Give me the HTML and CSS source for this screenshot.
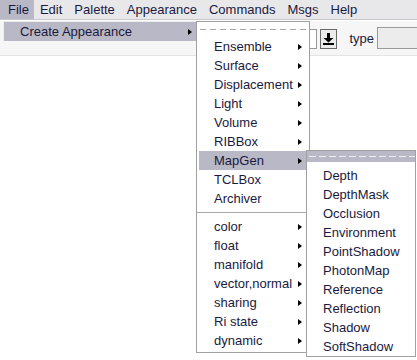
FILE: index.html
```html
<!DOCTYPE html>
<html>
<head>
    <meta charset="UTF-8">
    <meta name="viewport" content="width=device-width,initial-scale=1.0">
    <title>Appearance</title>
    <link rel="stylesheet" href="styles.css">
</head>
<body>
    <div class="menubar">
        <span class="menu active">File</span>
        <span class="menu">Edit</span>
        <span class="menu">Palette</span>
        <span class="menu">Appearance</span>
        <span class="menu">Commands</span>
        <span class="menu">Msgs</span>
        <span class="menu">Help</span>
    </div>
    <div class="toolbar">
        <div class="field small"></div>
        <div class="dl">
            <svg width="11" height="12" viewBox="0 0 11 12">
                <rect x="4" y="0" width="3" height="5" fill="#000"/>
                <polygon points="0.5,5 10.5,5 5.5,9.5" fill="#000"/>
                <rect x="0" y="10" width="11" height="2" fill="#000"/>
            </svg>
        </div>
        <span class="lbl">type</span>
        <div class="field wide"></div>
    </div>

    <div class="popup file-menu">
        <div class="item hot">Create Appearance<i class="arrow"></i></div>
    </div>

    <div class="popup appearance-menu">
        <div class="tearoff"></div>
        <div class="item">Ensemble<i class="arrow"></i></div>
        <div class="item">Surface<i class="arrow"></i></div>
        <div class="item">Displacement<i class="arrow"></i></div>
        <div class="item">Light<i class="arrow"></i></div>
        <div class="item">Volume<i class="arrow"></i></div>
        <div class="item">RIBBox<i class="arrow"></i></div>
        <div class="item hot">MapGen<i class="arrow"></i></div>
        <div class="item">TCLBox</div>
        <div class="item">Archiver</div>
        <div class="sep"></div>
        <div class="item">color<i class="arrow"></i></div>
        <div class="item">float<i class="arrow"></i></div>
        <div class="item">manifold<i class="arrow"></i></div>
        <div class="item">vector,normal<i class="arrow"></i></div>
        <div class="item">sharing<i class="arrow"></i></div>
        <div class="item">Ri state<i class="arrow"></i></div>
        <div class="item">dynamic<i class="arrow"></i></div>
    </div>

    <div class="popup mapgen-menu">
        <div class="tearoff"></div>
        <div class="item">Depth</div>
        <div class="item">DepthMask</div>
        <div class="item">Occlusion</div>
        <div class="item">Environment</div>
        <div class="item">PointShadow</div>
        <div class="item">PhotonMap</div>
        <div class="item">Reference</div>
        <div class="item">Reflection</div>
        <div class="item">Shadow</div>
        <div class="item">SoftShadow</div>
    </div>
</body>
</html>
```

FILE: styles.css
```css
body{margin: 0;background: #fff;font-family: "Liberation Sans", Arial, sans-serif;font-size: 13px;color: #1a1a40;width: 417px;height: 360px;overflow: hidden;position: relative;}

.menubar{display: flex;height: 19px;background: #e8e8ea;border-bottom: 1px solid #c8c8c8;padding-left: 2px;}
.menu{padding: 0 6px;line-height: 19px;}
.menu.active{background: #b8b8c6;margin-left: -2px;padding-left: 8px;padding-right: 5px;}

.toolbar{display: flex;align-items: center;justify-content: flex-end;height: 34px;background: #f6f6f6;border-top: 1px solid #fff;border-bottom: 1px solid #e4e4e4;}
.field{box-sizing: border-box;height: 20px;border: 1px solid #9a9a9a;background: #fff;}
.field.small{width: 22px;margin-top: 1px;}
.field.wide{width: 40px;background: #ececec;border-right: 0;height: 22px;}
.dl{box-sizing: border-box;width: 17px;height: 20px;margin: 1px 0 0 3px;border: 1px solid #6a6a6a;background: #ececec;display: flex;align-items: center;justify-content: center;}
.dl svg{display: block;}
.lbl{margin: 0 3px 0 12px;color: #1a1a40;}

.popup{position: absolute;background: #fff;border: 1px solid #a0a0a0;box-sizing: border-box;}
.file-menu{left: 3px;top: 21px;width: 195px;border-color: #ececec;border-bottom: 0;}
.appearance-menu{left: 196px;top: 21px;width: 114px;padding-bottom: 2px;}
.mapgen-menu{left: 306px;top: 150px;width: 110px;}

.item{display: flex;align-items: center;justify-content: space-between;height: 19px;line-height: 19px;padding: 0 8px 0 16px;white-space: nowrap;}
.item.hot{background: #b8b8c6;}
.file-menu .item{padding-right: 5px;}
.appearance-menu .item{margin: 0 3px 0 2px;padding: 0 4px 0 15px;}
.mapgen-menu .item{padding-left: 16px;}

.arrow{display: block;flex-shrink: 0;margin-left: 4px;width: 0;height: 0;border-left: 4px solid #000;border-top: 3.5px solid transparent;border-bottom: 3.5px solid transparent;}

.tearoff{height: 15px;margin-right: 3px;background: linear-gradient(to right, #a8a8a8 6px, transparent 6px) repeat-x 3px 7px / 10px 1px;}
.mapgen-menu .tearoff{height: 11px;margin: 0 0 4px 0;background-color: #b8b8c6;background-image: linear-gradient(to right, #eeeef2 7px, transparent 7px);background-position: 2px 5px;}

.sep{height: 9px;margin-right: 3px;background: linear-gradient(#a8a8a8, #a8a8a8) no-repeat 0 4px / 100% 1px;}
```
